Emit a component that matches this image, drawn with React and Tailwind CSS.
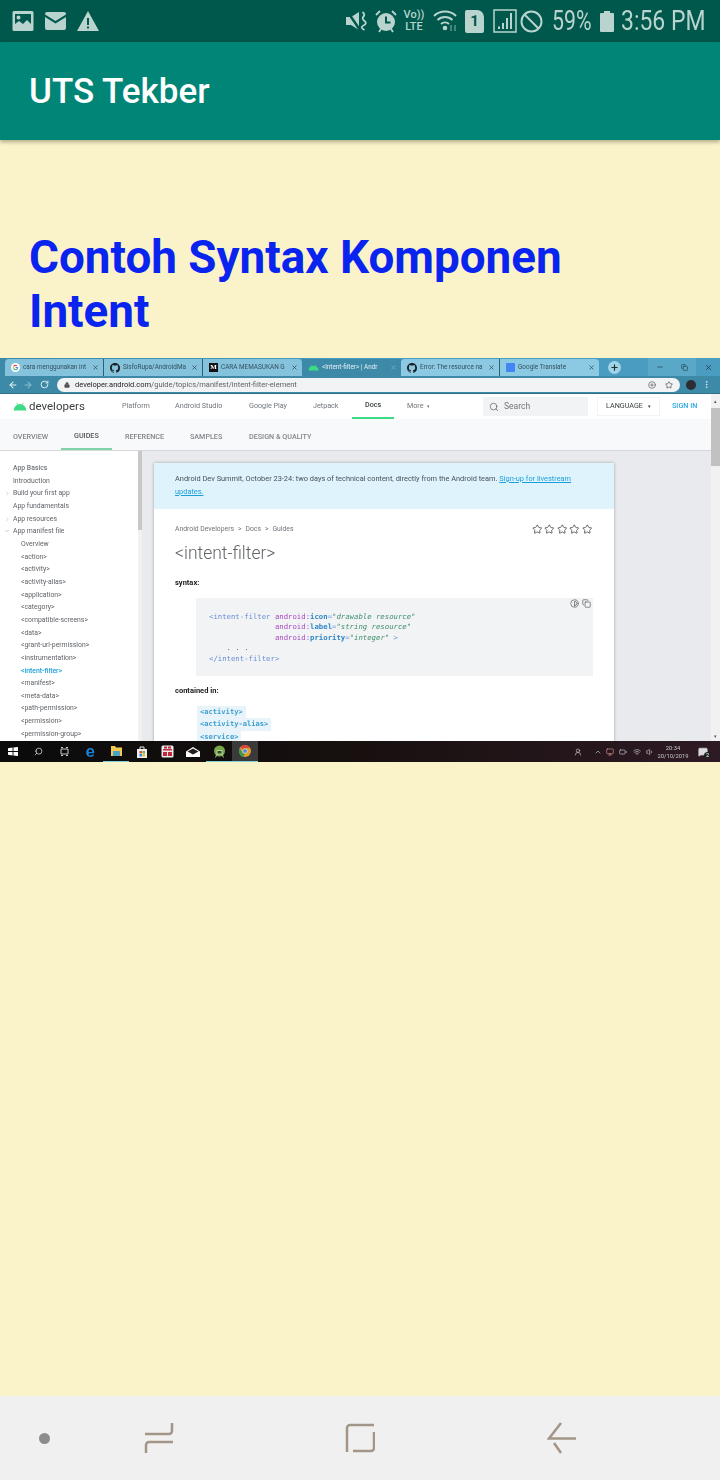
import { Search, Star, Copy, ArrowLeft, ArrowRight, RotateCw, Lock, Plus, X, Minus, EllipsisVertical, ChevronRight, ChevronUp, ChevronDown, Contrast, PlusCircle, Volume1, Wifi, Battery, UserRound, Monitor, MessageSquare } from 'lucide-react'

const sans = "font-['Roboto',sans-serif]"
const mono = "font-['DejaVu_Sans_Mono','Liberation_Mono',monospace]"

function GoogleG() {
  return (
    <svg width="9" height="9" viewBox="0 0 24 24" className="shrink-0">
      <circle cx="12" cy="12" r="12" fill="#fff" />
      <path d="M12 5a7 7 0 0 1 4.8 1.9l-2 2A4.2 4.2 0 0 0 8 10.500L5.700 8.800A7 7 0 0 1 12 5z" fill="#ea4335" />
      <path d="M5.700 8.800 8 10.500a4.300 4.300 0 0 0 0 3L5.700 15.200a7 7 0 0 1 0-6.400z" fill="#fbbc05" />
      <path d="M8 13.500a4.200 4.200 0 0 0 6.500 2l2.200 1.700A7 7 0 0 1 5.700 15.200z" fill="#34a853" />
      <path d="M19 12c0 2-.8 3.900-2.300 5.200l-2.200-1.700c.8-.6 1.300-1.400 1.500-2.300H12v-2.700h6.800c.1.500.2 1 .2 1.500z" fill="#4285f4" />
    </svg>
  )
}

function GithubMark() {
  return (
    <svg width="10" height="10" viewBox="0 0 16 16" className="shrink-0" fill="#1b1f23">
      <path d="M8 0C3.580 0 0 3.580 0 8c0 3.540 2.290 6.530 5.470 7.590.4.070.55-.17.55-.38 0-.19-.01-.82-.01-1.490-2.010.37-2.530-.49-2.690-.94-.09-.23-.48-.94-.82-1.130-.28-.15-.68-.52-.01-.53.63-.01 1.080.58 1.230.82.720 1.210 1.870.87 2.330.66.070-.52.280-.87.510-1.070-1.780-.2-3.640-.89-3.640-3.950 0-.87.310-1.590.820-2.150-.08-.2-.36-1.020.08-2.120 0 0 .670-.21 2.200.820a7.500 7.500 0 0 1 4 0c1.530-1.040 2.200-.820 2.200-.820.440 1.100.160 1.920.080 2.120.510.560.820 1.270.820 2.150 0 3.070-1.870 3.750-3.650 3.950.290.250.540.730.540 1.480 0 1.070-.01 1.930-.01 2.200 0 .210.150.460.550.380A8.010 8.010 0 0 0 16 8c0-4.420-3.580-8-8-8z" />
    </svg>
  )
}

function Droid({ w = 13, color = '#3ddc84' }) {
  return (
    <svg width={w} height={w * 0.6} viewBox="0 0 20 12" className="shrink-0" fill={color}>
      <path d="M1 12a9 9 0 0 1 18 0z" />
      <path d="M5 1l2 3M15 1l-2 3" stroke={color} strokeWidth="1" />
    </svg>
  )
}

function Tab({ icon, label, active, sep }) {
  return (
    <div className={`flex h-full w-[99px] items-center gap-[3px] pl-[6px] pr-[4px] ${active ? 'bg-[#3d89a8] text-[#e4f1f6]' : 'text-[#34505e]'} ${sep ? 'border-r border-[#2f5f75]' : ''}`}>
      {icon}
      <span className="text-[6.400px] whitespace-nowrap">{label}</span>
      <X size={7} strokeWidth={2.500} className={`ml-auto shrink-0 ${active ? 'text-[#7fb4ca]' : 'text-[#33454f]'}`} />
    </div>
  )
}

function BrowserChrome() {
  return (
    <>
      <div className="flex h-[18px] items-end bg-gradient-to-r from-[#3d89a8] via-[#4a9cc0] to-[#4a9cc0] pl-[5px]">
        <div className="flex h-[17px] items-stretch rounded-t-[4px] bg-[#85c3dd]">
          <Tab icon={<GoogleG />} label="cara menggunakan int" sep />
          <Tab icon={<GithubMark />} label="SisfoRupa/AndroidMa" sep />
          <Tab icon={<span className="flex h-[9px] w-[9px] shrink-0 items-center justify-center bg-[#111] font-['Liberation_Serif',serif] text-[7px] font-bold text-white">M</span>} label="CARA MEMASUKAN G" />
        </div>
        <div className="flex h-[17px] items-stretch rounded-t-[4px]">
          <Tab icon={<Droid w={11} />} label="<intent-filter> | Andr" active />
        </div>
        <div className="flex h-[17px] items-stretch rounded-t-[4px] bg-[#8ccae3]">
          <Tab icon={<GithubMark />} label="Error: The resource na" sep />
          <Tab icon={<span className="h-[9px] w-[9px] shrink-0 rounded-[1px] bg-[#4285f4]" />} label="Google Translate" />
        </div>
        <div className="mb-[2px] ml-[9px] flex h-[13px] w-[13px] items-center justify-center rounded-full bg-[#9ed3e8]">
          <Plus size={9} strokeWidth={3} className="text-[#1d2b33]" />
        </div>
        <div className="ml-auto flex h-full items-center text-[#1f3a48]">
          <div className="flex h-full w-[24px] items-center justify-center bg-[#5aa8c8]"><Minus size={8} /></div>
          <div className="flex h-full w-[24px] items-center justify-center bg-[#5aa8c8]"><Copy size={7} /></div>
          <div className="flex h-full w-[24px] items-center justify-center"><X size={9} /></div>
        </div>
      </div>
      <div className="flex h-[18px] items-center border-b border-[#2f6f8a] bg-[#3d89a8] pl-[8px] pr-[8px] text-[#e8f3f8]">
        <ArrowLeft size={10} strokeWidth={2.500} />
        <ArrowRight size={10} strokeWidth={2.500} className="ml-[5px] text-[#8fbfd4]" />
        <RotateCw size={9} strokeWidth={2.500} className="ml-[7px]" />
        <div className="ml-[8px] flex h-[14px] w-[623px] items-center rounded-full bg-[#f1f3f4] pl-[7px] pr-[7px]">
          <Lock size={6} fill="#555" className="text-[#555]" />
          <span className="ml-[5px] text-[7.500px] text-[#5f6368]"><span className="text-[#222]">developer.android.com</span>/guide/topics/manifest/intent-filter-element</span>
          <PlusCircle size={8} className="ml-auto text-[#555]" />
          <Star size={8} className="ml-[9px] text-[#444]" />
        </div>
        <span className="ml-[6px] h-[10px] w-[10px] rounded-full bg-[#2b2d33]" />
        <EllipsisVertical size={9} className="ml-[6px]" />
      </div>
    </>
  )
}

const topNav = [
  ['Platform', 'w-[53px]'],
  ['Android Studio', 'w-[74px]'],
  ['Google Play', 'w-[64px]'],
  ['Jetpack', 'w-[39px]'],
]

const subNav = [
  ['OVERVIEW', 'w-[61px]', ''],
  ['GUIDES', 'w-[51px]', 'border-b-[2px] border-[#7fd4a6] text-[#555]'],
  ['REFERENCE', 'w-[65px]', ''],
  ['SAMPLES', 'w-[59px]', ''],
  ['DESIGN & QUALITY', '', ''],
]

function SiteHeader() {
  return (
    <>
      <div className={`flex h-[25px] items-center bg-white pl-[13px] ${sans}`}>
        <Droid w={14} />
        <span className="ml-[2px] w-[93px] text-[11.500px] text-[#3c4043]">developers</span>
        {topNav.map(([label, w]) => (
          <span key={label} className={`${w} text-[7.200px] text-[#70757a]`}>{label}</span>
        ))}
        <span className="flex h-full w-[42px] items-center border-b-[2px] border-[#3ddc84] pl-[13px] text-[7.200px] font-medium text-[#3c4043]">Docs</span>
        <span className="flex w-[89px] items-center gap-[3px] pl-[13px] text-[7.200px] text-[#70757a]">More<span className="text-[5px]">▾</span></span>
        <div className="flex h-[19px] w-[105px] items-center gap-[5px] bg-[#f1f3f4] pl-[6px] text-[8.500px] text-[#70757a]">
          <Search size={10} />
          Search
        </div>
        <div className="ml-[9px] flex h-[19px] w-[63px] items-center justify-center gap-[5px] border border-[#f1f3f4] text-[7.200px] text-[#3c4043]">
          LANGUAGE<span className="text-[5px]">▾</span>
        </div>
        <span className="ml-[12px] text-[7.200px] font-medium text-[#29a8e0]">SIGN IN</span>
      </div>
      <div className={`flex h-[32px] border-b-[1px] border-[#d5d7da] bg-[#f8f9fa] text-[7.200px] font-medium text-[#80868b] ${sans}`}>
        {subNav.map(([label, w, tone]) => (
          <div key={label} className={`flex items-center pl-[13px] pt-[5px] ${w} ${tone}`}>{label}</div>
        ))}
      </div>
    </>
  )
}

const sideItems = [
  ['App Basics', 0, '', 'font-medium text-[#70757a]'],
  ['Introduction', 0],
  ['Build your first app', 0, 'right'],
  ['App fundamentals', 0],
  ['App resources', 0, 'right'],
  ['App manifest file', 0, 'down'],
  ['Overview', 1],
  ['<action>', 1],
  ['<activity>', 1],
  ['<activity-alias>', 1],
  ['<application>', 1],
  ['<category>', 1],
  ['<compatible-screens>', 1],
  ['<data>', 1],
  ['<grant-uri-permission>', 1],
  ['<instrumentation>', 1],
  ['<intent-filter>', 1, '', 'font-medium text-[#1a9fdc]'],
  ['<manifest>', 1],
  ['<meta-data>', 1],
  ['<path-permission>', 1],
  ['<permission>', 1],
  ['<permission-group>', 1],
]

function Sidebar() {
  return (
    <div className={`flex h-full w-[142px] shrink-0 overflow-hidden bg-white ${sans}`}>
      <div className="w-[138px] pt-[11px]">
        {sideItems.map(([label, depth, arrow, tone]) => (
          <div key={label} className={`relative h-[12.660px] whitespace-nowrap text-[6.850px] leading-[12.660px] ${depth ? 'pl-[21px]' : 'pl-[13px]'} ${tone || 'text-[#5f6368]'}`}>
            {arrow === 'right' && <ChevronRight size={5} className="absolute left-[5px] top-[4px] text-[#999]" />}
            {arrow === 'down' && <ChevronDown size={6} className="absolute left-[4px] top-[3px] text-[#999]" />}
            {label}
          </div>
        ))}
      </div>
      <div className="flex h-full w-[4px] flex-col bg-[#f1f1f1]">
        <div className="h-[79px] bg-[#c8c8c8]" />
      </div>
    </div>
  )
}

function CodeBlock() {
  const pink = 'text-[#a848c0]'
  const blue = 'font-bold text-[#2f86c8]'
  const str = 'italic text-[#3f8f6f]'
  const tag = 'text-[#6a8fd8]'
  const pad = '\u00a0'.repeat(15)
  return (
    <div className={`relative ml-[42px] mr-[21px] mt-[10px] h-[78px] bg-[#f1f3f4] pl-[13px] pt-[14px] ${mono} text-[7.300px] leading-[10.600px]`}>
      <div className="absolute right-[2px] top-[1px] flex gap-[3px] text-[#666]">
        <Contrast size={9} />
        <Copy size={9} />
      </div>
      <div className="whitespace-pre"><span className={tag}>{'<intent-filter '}</span><span className={pink}>android:</span><span className={blue}>icon</span><span className={tag}>=</span><span className={str}>"drawable resource"</span></div>
      <div className="whitespace-pre"><span>{pad}</span><span className={pink}>android:</span><span className={blue}>label</span><span className={tag}>=</span><span className={str}>"string resource"</span></div>
      <div className="whitespace-pre"><span>{pad}</span><span className={pink}>android:</span><span className={blue}>priority</span><span className={tag}>=</span><span className={str}>"integer"</span><span className={tag}>{' >'}</span></div>
      <div className="whitespace-pre text-[#666]">{'    . . .'}</div>
      <div className={`whitespace-pre ${tag}`}>{'</intent-filter>'}</div>
    </div>
  )
}

function ArticleCard() {
  const codeTag = `block w-fit bg-[#e8f4fa] px-[3px] ${mono} text-[7.100px] font-bold leading-[12.800px] text-[#3f9fd0]`
  return (
    <div className={`ml-[12px] mt-[12px] h-[300px] w-[460px] shrink-0 overflow-hidden bg-white shadow-[0_0_3px_rgba(0,0,0,0.3)] ${sans}`}>
      <div className="h-[46px] bg-[#dff3fd] px-[21px] pt-[10px] text-[7.400px] leading-[12.500px] text-[#4a5055]">
        Android Dev Summit, October 23-24: two days of technical content, directly from the Android team. <span className="text-[#1a9fdc] underline">Sign-up for livestream updates.</span>
      </div>
      <div className="flex items-center justify-between pl-[21px] pr-[22px] pt-[15px] text-[6.800px] text-[#70757a]">
        <span>Android Developers<span className="mx-[4px]">&gt;</span>Docs<span className="mx-[4px]">&gt;</span>Guides</span>
        <span className="flex gap-[2px] text-[#555]">
          {[0, 1, 2, 3, 4].map((n) => <Star key={n} size={10.500} />)}
        </span>
      </div>
      <h1 className="pl-[21px] pt-[7px] text-[17.500px] font-light leading-[22px] text-[#616569]">&lt;intent-filter&gt;</h1>
      <p className="pl-[21px] pt-[14px] text-[7.500px] font-bold leading-[10px] text-[#202124]">syntax:</p>
      <CodeBlock />
      <p className="pl-[21px] pt-[10px] text-[7.500px] font-bold leading-[10px] text-[#202124]">contained in:</p>
      <div className="ml-[43px] mt-[10px]">
        <span className={codeTag}>&lt;activity&gt;</span>
        <span className={codeTag}>&lt;activity-alias&gt;</span>
        <span className={codeTag}>&lt;service&gt;</span>
      </div>
    </div>
  )
}

const taskIcons = [
  ['start', false, (
    <svg width="10" height="9" viewBox="0 0 11 9" fill="#fff">
      <path d="M0 1l5-1v4H0zM6 0l5-.5V4H6zM0 5h5v4L0 8zM6 5h5v4.500L6 9z" />
    </svg>
  )],
  ['search', false, <Search size={9} className="-scale-x-100 text-[#ddd]" />],
  ['tasks', false, (
    <svg width="9" height="9" viewBox="0 0 9 9" fill="none" stroke="#ccc">
      <path d="M1 2h7v5H1zM1 .5h2M1 8.500h2M6 .5h2M6 8.500h2" />
    </svg>
  )],
  ['edge', false, <span className="font-['Liberation_Sans',sans-serif] text-[17px] font-bold leading-none text-[#1683d8]">e</span>],
  ['files', true, (
    <svg width="11" height="10" viewBox="0 0 11 10">
      <path d="M0 0h4l1 1.500h6V10H0z" fill="#f3c94f" />
      <path d="M2 5h7v5H2z" fill="#4da0c8" />
    </svg>
  )],
  ['store', false, (
    <svg width="12" height="12" viewBox="0 0 12 12">
      <path d="M1 3h10v9H1z" fill="#eee" />
      <path d="M4 3V1h4v2" fill="none" stroke="#eee" />
      <path d="M3.500 5H6v2.500H3.500z" fill="#e0503a" />
      <path d="M6.500 5H9v2.500H6.500z" fill="#6cb33f" />
      <path d="M3.500 8H6v2.500H3.500z" fill="#2d8fe0" />
      <path d="M6.500 8H9v2.500H6.500z" fill="#f3b92f" />
    </svg>
  )],
  ['gift', false, (
    <svg width="13" height="13" viewBox="0 0 13 13">
      <rect x="0.500" y="0.500" width="12" height="12" rx="1.500" fill="#ececec" />
      <path d="M2 4h9v1.500H2zM2 7h4v4H2zM7 7h4v4H7zM3 1.500h3v2H3zM7 1.500h3v2H7z" fill="#c2283c" />
    </svg>
  )],
  ['mail', false, (
    <svg width="14" height="10" viewBox="0 0 14 10">
      <path d="M0 4.500 7 0l7 4.500V10H0z" fill="#fff" />
      <path d="M1.500 4.500 7 1.500l5.500 3L7 7.500z" fill="#222" />
    </svg>
  )],
  ['studio', true, (
    <svg width="13" height="13" viewBox="0 0 13 13">
      <circle cx="6.500" cy="6" r="5.500" fill="#78a84a" />
      <path d="M4 5.500h5V9H4zM4 9l-1.500 3.500M9 9l1.500 3.500" fill="#2f4f2f" stroke="#cfe0b0" strokeWidth="0.800" />
    </svg>
  )],
  ['chrome', true, (
    <svg width="12" height="12" viewBox="0 0 24 24">
      <circle cx="12" cy="12" r="12" fill="#e0a030" />
      <path d="M12 0a12 12 0 0 1 10.400 6H12a6 6 0 0 0-5.200 3L3 3.500A12 12 0 0 1 12 0z" fill="#d8453a" />
      <path d="M1.600 6 6.800 15a6 6 0 0 0 5.200 3L8 24A12 12 0 0 1 1.600 6z" fill="#3f9a4f" />
      <circle cx="12" cy="12" r="4.500" fill="#4a86d8" stroke="#fff" />
    </svg>
  )],
]

function Taskbar() {
  return (
    <div className="flex h-[21px] items-center bg-gradient-to-r from-[#0b0b0b] via-[#17100f] to-[#2e1a24] pr-[12px] text-white">
      {taskIcons.map(([name, open, icon]) => (
        <span key={name} className={`flex h-[21px] w-[25.800px] items-center justify-center ${open ? 'border-b-[1px] border-[#7fd0d8]' : ''} ${name === 'chrome' ? 'bg-[#3a3a3a]' : ''}`}>
          {icon}
        </span>
      ))}
      <div className="ml-auto flex items-center text-[#c8c8c8]">
        <UserRound size={8} />
        <ChevronUp size={8} className="ml-[12px]" />
        <Monitor size={8} className="ml-[4px] text-[#d89090]" />
        <Battery size={8} className="ml-[5px]" />
        <Wifi size={8} className="ml-[6px]" />
        <Volume1 size={8} className="ml-[5px]" />
        <div className={`ml-[3px] w-[32px] text-center text-[5.800px] leading-[8px] ${sans}`}>
          <div>20:34</div>
          <div>20/10/2019</div>
        </div>
        <span className="relative ml-[9px]">
          <MessageSquare size={10} fill="#ddd" />
          <span className="absolute -bottom-[2px] -right-[3px] flex h-[7px] w-[7px] items-center justify-center rounded-full bg-[#222] text-[5.500px] text-white">2</span>
        </span>
      </div>
    </div>
  )
}

function PageScrollbar() {
  return (
    <div className="flex h-full w-[9px] shrink-0 flex-col items-center bg-[#f1f1f1] text-[#555]">
      <div className="flex h-[14px] items-center justify-center text-[5px] leading-none">▴</div>
      <div className="h-[58px] w-full bg-[#c1c1c1]" />
      <div className="mt-auto flex h-[9px] items-center justify-center text-[5px] leading-none">▾</div>
    </div>
  )
}

function ScreenshotImage() {
  return (
    <div className={`mt-[19px] h-[404px] overflow-hidden bg-white blur-[0.25px] ${sans}`}>
      <BrowserChrome />
      <div className="flex h-[347px]">
        <div className="w-[711px] shrink-0">
          <SiteHeader />
          <div className="flex h-[290px] overflow-hidden bg-[#e8eaed]">
            <Sidebar />
            <ArticleCard />
          </div>
        </div>
        <PageScrollbar />
      </div>
      <Taskbar />
    </div>
  )
}

function StatusBar() {
  const ink = '#b9d3ce'
  return (
    <div className={`flex h-[42px] items-center justify-between bg-[#00574b] pl-[12px] pr-[15px] ${sans}`}>
      <div className="flex items-center gap-[11px]">
        <svg width="22" height="22" viewBox="0 0 22 22">
          <path fillRule="evenodd" fill={ink} d="M2 1h18a1.500 1.500 0 0 1 1.500 1.500v17A1.500 1.500 0 0 1 20 21H2a1.500 1.500 0 0 1-1.500-1.500v-17A1.500 1.500 0 0 1 2 1zM3 4v10l4-3 4 3 4-4 4 4V4zM6.500 5.500a2 2 0 1 1 0 4 2 2 0 0 1 0-4z" />
        </svg>
        <svg width="21" height="18" viewBox="0 0 21 18">
          <path fill={ink} d="M2 0h17a2 2 0 0 1 2 2v.5L10.500 9 0 2.500V2a2 2 0 0 1 2-2zM0 5l10.500 6.500L21 5v11a2 2 0 0 1-2 2H2a2 2 0 0 1-2-2z" />
        </svg>
        <svg width="22" height="20" viewBox="0 0 22 20">
          <path fillRule="evenodd" fill={ink} d="M11 0l11 20H0zM10 7v7h2V7zM10 15.500v2h2v-2z" />
        </svg>
      </div>
      <div className="flex items-center text-[#b9d3ce]">
        <svg width="22" height="22" viewBox="0 0 22 22" fill={ink}>
          <path d="M0 7h5l8-5v18l-8-5H0z" />
          <path d="M1 1l13 19" stroke="#00574b" strokeWidth="2.500" />
          <path d="M16.500 2q3 2.500 1 4.500t1 4.500-1 4.500 1 4.500" fill="none" stroke={ink} strokeWidth="1.800" />
        </svg>
        <svg width="22" height="23" viewBox="0 0 22 23" className="ml-[7px]">
          <circle cx="11" cy="12" r="9" fill={ink} />
          <path d="M11 6.500v6h4.500" fill="none" stroke="#00574b" strokeWidth="2" />
          <path d="M1 5l4-4M21 5l-4-4M4 22l2-3M18 22l-2-3" stroke={ink} strokeWidth="1.800" />
        </svg>
        <div className="ml-[6px] w-[22px] text-center text-[11px] font-medium leading-[12px]">
          <div className="whitespace-nowrap">Vo))</div>
          <div>LTE</div>
        </div>
        <svg width="27" height="24" viewBox="0 0 27 24" fill="none" stroke={ink} strokeWidth="2" className="ml-[8px]">
          <path d="M1 7a16 16 0 0 1 22 0M4.500 11a11 11 0 0 1 15 0M8 15a6 6 0 0 1 8 0" />
          <circle cx="12" cy="19" r="1.300" fill={ink} />
          <path d="M18 16v6M22 22v-6" strokeOpacity="0.500" strokeWidth="1.500" />
        </svg>
        <span className="ml-[5px] flex h-[23px] w-[19px] items-center justify-center rounded-[2px] rounded-tr-[7px] bg-[#b9d3ce] text-[15px] font-bold text-[#00574b]">1</span>
        <svg width="24" height="24" viewBox="0 0 24 24" className="ml-[9px]" fill={ink}>
          <rect x="1" y="1" width="22" height="22" fill="none" stroke={ink} strokeWidth="1.500" />
          <path d="M5 17.500h2V20H5zM9 14h2v6H9zM13 9h2v11h-2zM17 4h2v16h-2z" />
        </svg>
        <svg width="23" height="23" viewBox="0 0 23 23" fill="none" stroke={ink} strokeWidth="2" className="ml-[3px]">
          <circle cx="11.500" cy="11.500" r="10" />
          <path d="M4.500 4.500l14 14" />
        </svg>
        <span className="ml-[9px] w-[40px] origin-left scale-x-[0.76] whitespace-nowrap text-[28px] leading-none">59%</span>
        <svg width="14" height="21" viewBox="0 0 14 21" className="ml-[8px]">
          <path fill="#b9d3ce" d="M4 0h6v2h3a1 1 0 0 1 1 1v17a1 1 0 0 1-1 1H1a1 1 0 0 1-1-1V3a1 1 0 0 1 1-1h3z" />
        </svg>
        <span className="ml-[7px] w-[84px] origin-left scale-x-[0.82] whitespace-nowrap text-[28px] leading-none">3:56 PM</span>
      </div>
    </div>
  )
}

function NavBar() {
  return (
    <div className="flex h-[84px] items-center bg-[#f0f0f0] pl-[39px]">
      <span className="h-[11px] w-[11px] rounded-full bg-[#8c8c8c]" />
      <svg width="30" height="32" viewBox="0 0 30 32" fill="none" stroke="#a39689" strokeWidth="2.500" className="ml-[94px]">
        <path d="M1 12h24a3 3 0 0 0 3-3V1M29 20H5a3 3 0 0 0-3 3v8" />
      </svg>
      <svg width="30" height="30" viewBox="0 0 30 30" fill="none" stroke="#a39689" strokeWidth="2.500" className="ml-[171px]">
        <path d="M29 2H5a3 3 0 0 0-3 3v24M8 28h18a3 3 0 0 0 3-3V9" />
      </svg>
      <svg width="30" height="32" viewBox="0 0 30 32" fill="none" stroke="#a39689" strokeWidth="2.500" className="ml-[172px]">
        <path d="M14 1 2 16.500h27M7 21l7 10" />
      </svg>
    </div>
  )
}

export default function App() {
  return (
    <div className={`flex h-[1480px] w-[720px] flex-col overflow-hidden bg-[#faf2c8] ${sans}`}>
      <StatusBar />
      <div className="z-10 flex h-[98px] items-center bg-[#008577] pl-[29px] pt-[1px] shadow-[0_2px_4px_rgba(0,0,0,0.3)]">
        <span className="text-[35px] font-medium leading-none text-white">UTS Tekber</span>
      </div>
      <div className="flex-1">
        <h1 className="px-[29px] pt-[91px] text-[45.800px] font-bold leading-[54px] text-[#0a24f0]">
          Contoh Syntax Komponen Intent
        </h1>
        <ScreenshotImage />
      </div>
      <NavBar />
    </div>
  )
}
